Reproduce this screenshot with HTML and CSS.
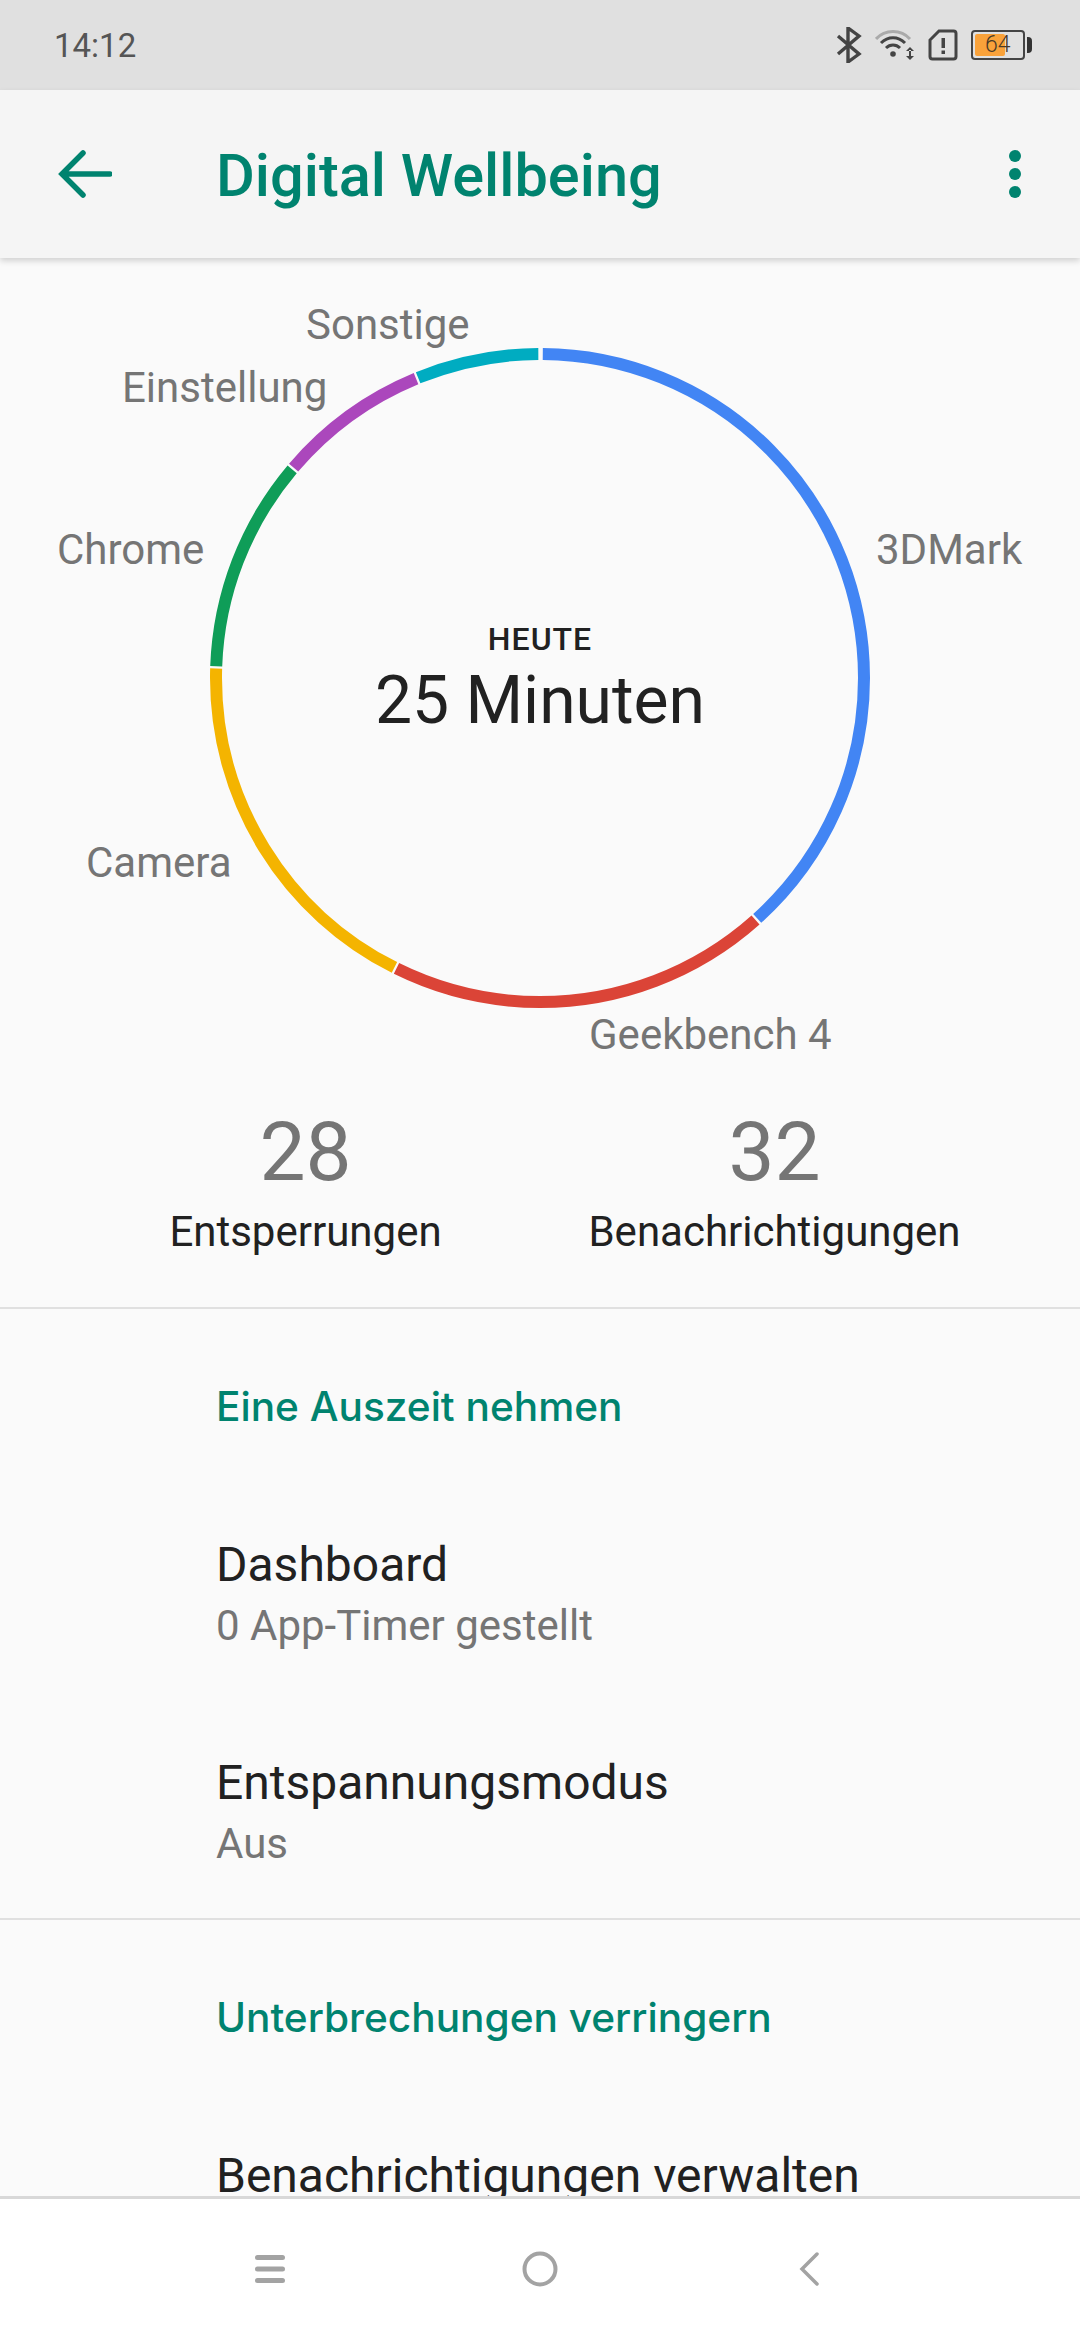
FILE: index.html
```html
<!DOCTYPE html>
<html lang="de">
<head>
    <meta charset="UTF-8">
    <title>Digital Wellbeing</title>
    <link rel="stylesheet" href="styles.css">
</head>
<body>
    <div class="screen">
        <div class="status-bar">
            <span class="clock">14:12</span>
            <div class="status-icons">
                <svg class="ic-bt" width="26" height="36" viewBox="0 0 26 36"><path d="M2 9l21 18-11 8V1l11 8L2 27" fill="none" stroke="#444" stroke-width="3.4"/></svg>
                <svg class="ic-wifi" width="40" height="30" viewBox="0 0 40 30">
                    <path d="M1 9C10 -1 26 -1 35 9" fill="none" stroke="#aaa" stroke-width="3"/>
                    <path d="M6 13C13 6 23 6 30 13" fill="none" stroke="#444" stroke-width="3"/>
                    <path d="M11 18C15 14 21 14 25 18" fill="none" stroke="#444" stroke-width="3"/>
                    <circle cx="18" cy="24" r="2.8" fill="#444"/>
                    <path d="M35 17l-4 4h8zM35 30l-4-4h8zM34 20h2v7h-2z" fill="#444"/>
                </svg>
                <svg class="ic-sim" width="30" height="32" viewBox="0 0 30 32">
                    <path d="M11 2H25.500A2.500 2.500 0 0 1 28 4.500V27.500A2.500 2.500 0 0 1 25.500 30H4.500A2.500 2.500 0 0 1 2 27.500V11z" fill="none" stroke="#444" stroke-width="3"/>
                    <path d="M13.500 9h3.500v10h-3.500zM13.500 21.500h3.500v3.500h-3.500z" fill="#444"/>
                </svg>
                <div class="battery">
                    <div class="battery-body">
                        <div class="battery-fill"></div>
                        <span class="battery-num">64</span>
                    </div>
                    <div class="battery-nub"></div>
                </div>
            </div>
        </div>

        <header class="app-bar">
            <svg class="back" width="54" height="50" viewBox="0 0 54 50"><path d="M25 4L4 25l21 21M5 25h47" fill="none" stroke="#00836f" stroke-width="5.500" stroke-linecap="round"/></svg>
            <h1 class="title">Digital Wellbeing</h1>
            <svg class="more" width="14" height="50" viewBox="0 0 14 50">
                <circle cx="7" cy="7" r="6" fill="#00836f"/>
                <circle cx="7" cy="25" r="6" fill="#00836f"/>
                <circle cx="7" cy="43" r="6" fill="#00836f"/>
            </svg>
        </header>

        <main class="content">
            <section class="chart">
                <svg class="ring" width="660" height="660" viewBox="0 0 660 660">
                    <g fill="none" stroke-width="12" transform="rotate(-90 330 330)">
                        <circle cx="330" cy="330" r="324" pathLength="360" stroke="#4285f4" stroke-dasharray="137.400 360" stroke-dashoffset="-0.500"/>
                        <circle cx="330" cy="330" r="324" pathLength="360" stroke="#db4437" stroke-dasharray="68 360" stroke-dashoffset="-138.300"/>
                        <circle cx="330" cy="330" r="324" pathLength="360" stroke="#f4b400" stroke-dasharray="65 360" stroke-dashoffset="-206.700"/>
                        <circle cx="330" cy="330" r="324" pathLength="360" stroke="#0f9d58" stroke-dasharray="38 360" stroke-dashoffset="-272.100"/>
                        <circle cx="330" cy="330" r="324" pathLength="360" stroke="#ab47bc" stroke-dasharray="27 360" stroke-dashoffset="-310.500"/>
                        <circle cx="330" cy="330" r="324" pathLength="360" stroke="#00acc1" stroke-dasharray="21.800 360" stroke-dashoffset="-337.900"/>
                    </g>
                </svg>
                <div class="total">
                    <div class="total-label">HEUTE</div>
                    <div class="total-value">25 Minuten</div>
                </div>
                <span class="slice-label l-sonstige">Sonstige</span>
                <span class="slice-label l-einstellung">Einstellung</span>
                <span class="slice-label l-chrome">Chrome</span>
                <span class="slice-label l-camera">Camera</span>
                <span class="slice-label l-3dmark">3DMark</span>
                <span class="slice-label l-geekbench">Geekbench 4</span>
            </section>

            <section class="stats">
                <div class="stat">
                    <div class="stat-num">28</div>
                    <div class="stat-label">Entsperrungen</div>
                </div>
                <div class="stat">
                    <div class="stat-num">32</div>
                    <div class="stat-label">Benachrichtigungen</div>
                </div>
            </section>

            <section class="group">
                <h2 class="group-title">Eine Auszeit nehmen</h2>
                <div class="item">
                    <div class="item-title">Dashboard</div>
                    <div class="item-sub">0 App-Timer gestellt</div>
                </div>
                <div class="item">
                    <div class="item-title">Entspannungsmodus</div>
                    <div class="item-sub">Aus</div>
                </div>
            </section>

            <section class="group">
                <h2 class="group-title">Unterbrechungen verringern</h2>
                <div class="item">
                    <div class="item-title">Benachrichtigungen verwalten</div>
                </div>
            </section>
        </main>

        <nav class="nav-bar">
            <svg width="30" height="28" viewBox="0 0 30 28">
                <path d="M2.500 2.500h25M2.500 14h25M2.500 25.500h25" stroke="#a3a3a3" stroke-width="5" stroke-linecap="round"/>
            </svg>
            <svg width="36" height="36" viewBox="0 0 36 36"><circle cx="18" cy="18" r="15.500" fill="none" stroke="#a3a3a3" stroke-width="4"/></svg>
            <svg class="nav-back" width="20" height="34" viewBox="0 0 20 34"><path d="M18 2L3 17l15 15" fill="none" stroke="#a3a3a3" stroke-width="3.500" stroke-linecap="round"/></svg>
        </nav>
    </div>
</body>
</html>
```

FILE: styles.css
```css
* {
    box-sizing: border-box;
}
body {
    margin: 0;
    font-family: Roboto, "Noto Sans", sans-serif;
    background-color: #fafafa;
}
.screen {
    width: 1080px;
    height: 2340px;
    display: flex;
    flex-direction: column;
    overflow: hidden;
}
.status-bar {
    height: 90px;
    flex: none;
    display: flex;
    align-items: center;
    justify-content: space-between;
    padding: 0 48px 0 54px;
    background-color: #e0e0e0;
}
.clock {
    font-size: 33px;
    color: #555;
}
.status-icons {
    display: flex;
    align-items: center;
    gap: 13px;
}
.battery {
    display: flex;
    align-items: center;
    gap: 2px;
}
.battery-body {
    position: relative;
    width: 54px;
    height: 30px;
    border: 2px solid #444;
    border-radius: 4px;
}
.battery-fill {
    width: 30px;
    height: 22px;
    margin: 2px;
    border-radius: 2px;
    background-color: #f9a23a;
}
.battery-num {
    position: absolute;
    left: 12px;
    top: 2px;
    font-size: 23px;
    line-height: 22px;
    font-weight: 300;
    color: #4a3a28;
}
.battery-nub {
    width: 5px;
    height: 16px;
    border-radius: 0 4px 4px 0;
    background-color: #333;
}
.app-bar {
    height: 168px;
    flex: none;
    display: flex;
    align-items: center;
    padding: 0 58px;
    background-color: #f5f5f5;
    box-shadow: 0 3px 6px rgba(0,0,0,0.16);
    position: relative;
}
.title {
    margin: 4px 0 0 104px;
    flex: 1;
    font-size: 59.5px;
    font-weight: 500;
    color: #00836f;
}
.content {
    flex: 1;
    min-height: 0;
    overflow: hidden;
}
.chart {
    position: relative;
    padding-top: 90px;
    height: 847px;
    display: flex;
    justify-content: center;
}
.ring {
    display: block;
}
.total {
    position: absolute;
    left: 0;
    right: 0;
    top: 360px;
    text-align: center;
    color: #212121;
}
.total-label {
    font-size: 32px;
    font-weight: 500;
    letter-spacing: 1px;
    line-height: 42px;
}
.total-value {
    font-size: 66px;
    line-height: 82px;
}
.slice-label {
    position: absolute;
    font-size: 42px;
    line-height: 48px;
    color: #757575;
}
.l-sonstige { left: 306px; top: 43px; }
.l-einstellung { left: 122px; top: 106px; }
.l-chrome { left: 57px; top: 268px; }
.l-camera { left: 86px; top: 581px; }
.l-3dmark { left: 876px; top: 268px; }
.l-geekbench { left: 589px; top: 753px; }
.stats {
    display: flex;
    height: 204px;
    padding-left: 71px;
    border-bottom: 2px solid #e0e0e0;
}
.stat {
    width: 469px;
    text-align: center;
}
.stat-num {
    font-size: 82px;
    line-height: 94px;
    color: #757575;
}
.stat-label {
    font-size: 42px;
    line-height: 66px;
    color: #212121;
}
.group {
    padding-left: 216px;
    border-bottom: 2px solid #e0e0e0;
}
.group:last-child {
    border-bottom: none;
}
.group-title {
    margin: 0;
    padding-top: 74px;
    padding-bottom: 106px;
    font-family: Inter, Roboto, sans-serif;
    font-size: 40.6px;
    line-height: 48px;
    font-weight: 500;
    color: #00836f;
}
.item {
    height: 218px;
}
.item:last-child {
    height: 163px;
}
.item-title {
    font-size: 48px;
    line-height: 56px;
    color: #212121;
}
.item-sub {
    margin-top: 7px;
    font-size: 42px;
    line-height: 52px;
    color: #757575;
}
.nav-bar {
    height: 144px;
    flex: none;
    display: flex;
    align-items: center;
    padding: 0 0 2px 255px;
    gap: 237px;
    background-color: #fff;
    border-top: 3px solid #d8d8d8;
}
.nav-back {
    margin-left: 4px;
}
```
